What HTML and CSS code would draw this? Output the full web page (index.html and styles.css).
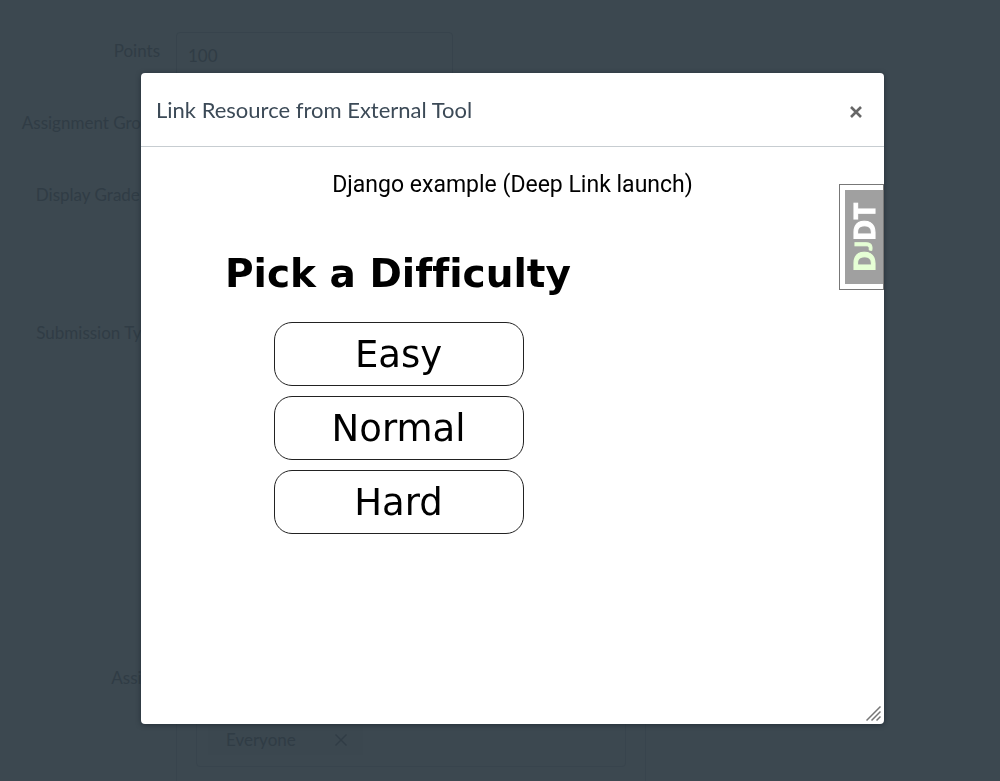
FILE: index.html
```html
<!DOCTYPE html>
<html lang="en">
<head>
<meta charset="utf-8">
<title>Link Resource from External Tool</title>
<link rel="stylesheet" href="styles.css">
</head>
<body>
<form class="assignment" inert>
  <div class="row row-points">
    <label class="label" for="points">Points</label>
    <input class="field" id="points" type="text" value="100">
  </div>
  <div class="row row-group"><span class="label">Assignment Group</span></div>
  <div class="row row-grade"><span class="label">Display Grade as</span></div>
  <div class="row row-submission"><span class="label">Submission Type</span></div>
  <div class="row row-assign">
    <span class="label">Assign</span>
    <div class="assign-box">
      <div class="token-field">
        <span class="token">Everyone
          <button class="token-remove" type="button" aria-label="Remove Everyone">
            <svg width="12" height="12" viewBox="0 0 12 12"><path d="M0.5 0.5 11.5 11.5M11.5 0.5 0.5 11.5" fill="none" stroke="currentColor" stroke-width="1.4"/></svg>
          </button>
        </span>
      </div>
    </div>
  </div>
</form>

<div class="overlay">
  <section class="dialog" role="dialog" aria-modal="true" aria-labelledby="dialog-title">
    <header class="dialog-header">
      <h2 class="dialog-title" id="dialog-title">Link Resource from External Tool</h2>
      <button class="close" type="button" aria-label="Close">
        <svg width="12" height="12" viewBox="0 0 12 12"><path d="M1 1 11 11M11 1 1 11" fill="none" stroke="currentColor" stroke-width="2.6"/></svg>
      </button>
    </header>
    <div class="dialog-body">
      <p class="launch">Django example (Deep Link launch)</p>
      <div class="picker">
        <h1 class="picker-title">Pick a Difficulty</h1>
        <div class="choices">
          <button class="choice" type="button">Easy</button>
          <button class="choice" type="button">Normal</button>
          <button class="choice" type="button">Hard</button>
        </div>
      </div>
      <button class="debug-handle" type="button" aria-label="Show toolbar">
        <span class="debug-logo"><span class="debug-dj">D<span class="debug-j">J</span></span>DT</span>
      </button>
    </div>
    <svg class="grip" width="15" height="15" viewBox="0 0 15 15"><path d="M0.5 14.5 14.5 0.5M5.5 14.5 14.5 5.5M10.5 14.5 14.5 10.5" fill="none" stroke="#777" stroke-width="1.5"/></svg>
  </section>
</div>
</body>
</html>
```

FILE: styles.css
```css
* {
  box-sizing: border-box;
}

body {
  margin: 0;
  height: 100vh;
  overflow: hidden;
  background: #3c4850;
  font-family: Lato, sans-serif;
}

.assignment {
  padding-top: 32px;
  color: #303c45;
  font-size: 17px;
  line-height: 24px;
}

.row {
  display: grid;
  grid-template-columns: 160px 1fr;
  column-gap: 16px;
}

.label {
  padding-top: 7px;
  text-align: right;
  white-space: nowrap;
}

.row-points { height: 72px; }
.row-group { height: 72px; }
.row-grade { height: 138px; }
.row-submission { height: 345px; }

.field {
  width: 277px;
  height: 48px;
  padding: 0 11px 2px;
  border: 1px solid #37434c;
  border-radius: 4px;
  background: transparent;
  color: inherit;
  font: inherit;
}

.assign-box {
  width: 470px;
  height: 140px;
  padding: 0 19px;
  border: 1px solid #38444d;
}

.token-field {
  height: 107px;
  padding: 64px 11px 0;
  border: 1px solid #38444d;
  border-radius: 4px;
}

.token {
  display: inline-flex;
  align-items: center;
  gap: 39px;
  height: 30px;
  padding: 0 16px 0 18px;
  background: #3b474f;
}

.token-remove {
  display: flex;
  padding: 0;
  border: 0;
  background: none;
  color: inherit;
}

.overlay {
  position: fixed;
  inset: 0;
  display: flex;
  padding: 73px 116px 57px 141px;
}

.dialog {
  position: relative;
  flex: 1;
  display: flex;
  flex-direction: column;
  border-radius: 4px;
  background: #fff;
  box-shadow: 0 1px 5px rgba(20, 30, 40, 0.6);
}

.dialog-header {
  display: flex;
  align-items: center;
  justify-content: space-between;
  height: 74px;
  padding: 0 22px 0 15px;
  border-bottom: 1px solid #c7cdd1;
}

.dialog-title {
  margin: 0;
  color: #3c4a57;
  font-size: 22px;
  font-weight: 400;
  line-height: 28px;
}

.close {
  display: flex;
  padding: 4px 0 0;
  border: 0;
  background: none;
  color: #666;
}

.dialog-body {
  position: relative;
  flex: 1;
  color: #000;
}

.launch {
  margin: 0;
  padding-top: 24px;
  font-family: Roboto, sans-serif;
  font-size: 23px;
  line-height: 28px;
  text-align: center;
}

.picker {
  width: 347px;
  margin: 51px 0 0 84px;
  font-family: "DejaVu Sans", sans-serif;
}

.picker-title {
  margin: 0;
  font-size: 39px;
  font-variant-ligatures: none;
  line-height: 48px;
  white-space: nowrap;
}

.choices {
  display: flex;
  flex-direction: column;
  gap: 10px;
  width: 250px;
  margin: 24px auto 0;
}

.choice {
  height: 64px;
  padding: 0;
  border: 1px solid #222;
  border-radius: 18px;
  background: #fff;
  color: #000;
  font: 37px "DejaVu Sans", sans-serif;
}

.debug-handle {
  position: absolute;
  top: 37px;
  right: 0;
  width: 45px;
  height: 106px;
  padding: 5px 0 5px 5px;
  border: 1px solid #777;
  background: #fff;
}

.debug-logo {
  display: flex;
  align-items: center;
  justify-content: center;
  height: 94px;
  background: #a0a0a0;
  color: #fff;
  font: bold 29px/38px "Open Sans", sans-serif;
  -webkit-text-stroke: 1px currentColor;
  writing-mode: vertical-rl;
  transform: rotate(180deg);
}

.debug-dj {
  color: #e6ffd5;
}

.debug-j {
  font-family: Lato, sans-serif;
  font-size: 22px;
}

.grip {
  position: absolute;
  right: 3px;
  bottom: 3px;
}
```
